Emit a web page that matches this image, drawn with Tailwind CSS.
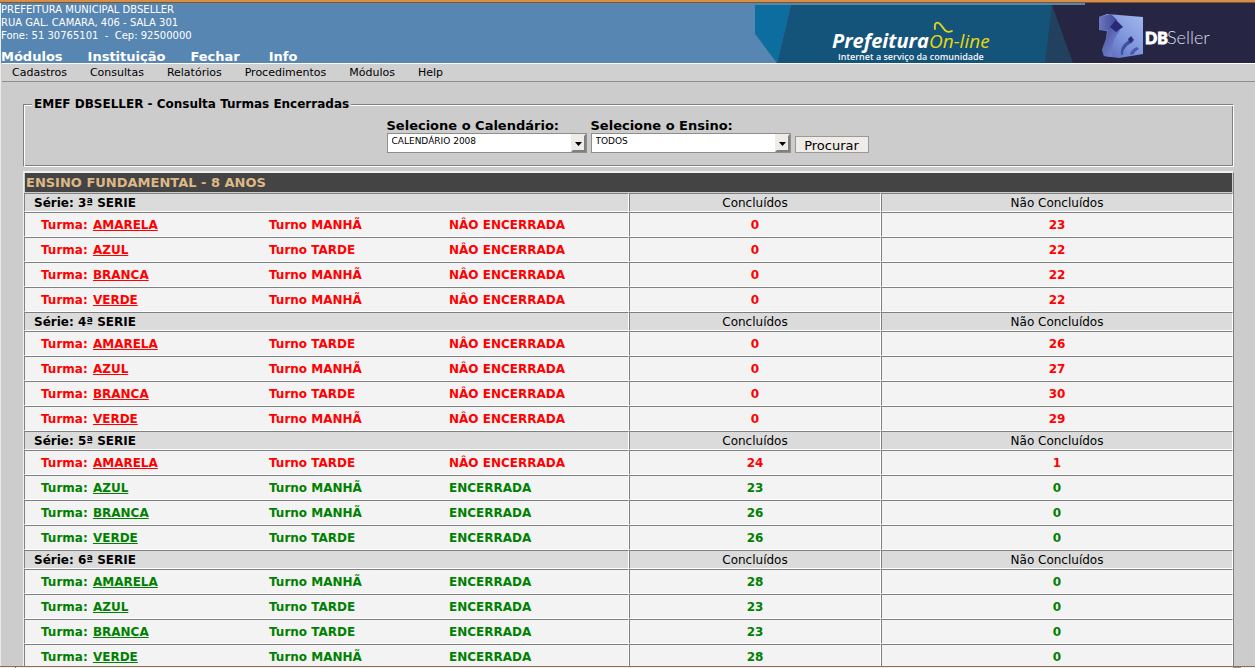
<!DOCTYPE html>
<html lang="pt-BR">
<head>
<meta charset="utf-8">
<title>Consulta Turmas Encerradas</title>
<script src="https://cdn.jsdelivr.net/npm/@tailwindcss/browser@4"></script>
</head>
<body class="flex h-screen flex-col overflow-hidden bg-[#cccccc] font-['DejaVu_Sans',sans-serif] text-[13px] leading-4 text-black">
<div class="h-[3px] shrink-0 border-b border-[#7d5630] bg-[#d78f47]"></div>
<div class="flex min-h-0 flex-1 flex-col overflow-hidden border-l border-[#efebe7]">
  <header class="flex h-[60px] shrink-0 justify-between bg-[#5786b2] text-white">
    <div class="flex flex-col justify-between">
      <address class="text-[10px] leading-[13px] whitespace-pre not-italic">PREFEITURA MUNICIPAL DBSELLER
RUA GAL. CAMARA, 406 - SALA 301
Fone: 51 30765101  -  Cep: 92500000</address>
      <nav class="flex gap-[25px] leading-3 font-bold">
        <a href="#">Módulos</a><a href="#">Instituição</a><a href="#">Fechar</a><a href="#" class="ml-1">Info</a>
      </nav>
    </div>
    <svg class="h-[60px] w-[500px] shrink-0" viewBox="0 0 500 60" role="img" aria-label="Prefeitura On-line - DBSeller">
      <defs>
        <linearGradient id="cube" x1="0" y1="1" x2="1" y2="0"><stop offset="0" stop-color="#5363b8"/><stop offset=".5" stop-color="#7f95dc"/><stop offset="1" stop-color="#a3b9ee"/></linearGradient>
        <linearGradient id="side" x1="0" y1="0" x2="1" y2="1"><stop offset="0" stop-color="#46509f"/><stop offset="1" stop-color="#7f8fd6"/></linearGradient>
        <linearGradient id="face" x1="0" y1="0" x2="1" y2="0"><stop offset="0" stop-color="#6b78bd"/><stop offset="1" stop-color="#3d459c"/></linearGradient>
      </defs>
      <path d="M0 2H36L22 60L0 31Z" fill="#0c6d9f"/>
      <path d="M36 2H330V60H22Z" fill="#14537a"/>
      <path d="M297 2H308L330 60H290Z" fill="#22415f"/>
      <path d="M297 2H330V0H500V60H318Z" fill="#262644"/>
      <text x="77" y="45" fill="#fff" font-family="Open Sans, sans-serif" font-size="20" font-weight="700" font-style="italic">Prefeitura</text>
      <text x="174" y="45" fill="#e8d80c" font-family="Open Sans, sans-serif" font-size="19" font-style="italic">On-line</text>
      <path d="M180 26C179 20 182 18 185 21C189 25 190 31 197 28" fill="none" stroke="#e2d616" stroke-width="1.8" stroke-linecap="round"/>
      <text x="83" y="57" fill="#f4f8fb" font-family="Open Sans, sans-serif" font-size="9" font-weight="600">Internet a serviço da comunidade</text>
      <path d="M344 14L352 11L388 14V51L364 55L349 53L347 47L351 36L352 28L344 27Z" fill="url(#cube)"/>
      <path d="M344 14L356 11L362 17L357 27L344 27Z" fill="url(#face)"/>
      <path d="M353 26L359 24L365 28C359 34 356 44 357 54L349 53L347 47L351 36Z" fill="url(#side)"/>
      <path d="M355 24L361 17L368 24L361 29Z" fill="#2a2879"/>
      <path d="M366 52C365 45 368 40 376 36L378 39C372 42 368 46 368 52Z" fill="#4250a2"/>
      <path d="M373 36L376 33L379 37L375 40Z" fill="#2a2f76"/>
      <path d="M375 52C375 48 379 45 382 44L384 46C381 48 379 49 379 51Z" fill="#4959b0"/>
      <text x="390" y="41" fill="#fff" stroke="#fff" stroke-width=".9" font-family="Lato, sans-serif" font-size="16" font-weight="900">DB</text>
      <text x="412" y="41" fill="#dcdeea" font-family="Lato, sans-serif" font-size="18" font-weight="300">Seller</text>
    </svg>
  </header>
  <nav class="ml-px flex h-[19px] shrink-0 gap-[23px] border-t border-b border-t-white border-b-[#8e8e8e] bg-[#d0d0d0] pl-[10px] text-[11px] leading-[17px]">
    <a href="#">Cadastros</a><a href="#">Consultas</a><a href="#">Relatórios</a><a href="#">Procedimentos</a><a href="#">Módulos</a><a href="#">Help</a>
  </nav>
  <main class="mr-[21px] ml-[22px] pt-[14px]">
    <form>
      <fieldset class="h-[71px] border border-t-[#808080] border-r-white border-b-white border-l-[#808080] pr-[10px] pl-2 shadow-[inset_1px_1px_0_#ffffff,inset_-1px_-1px_0_#808080]">
        <legend class="bg-[#cccccc] px-[2px] text-[12px] font-bold">EMEF DBSELLER - Consulta Turmas Encerradas</legend>
        <div class="flex items-end justify-center gap-1 pt-[6px]">
          <div class="flex w-50 flex-col">
            <label for="cal" class="leading-[15px] font-bold">Selecione o Calendário:</label>
            <div class="relative">
              <select id="cal" class="block h-5 w-full appearance-none border border-[#8e8e8e] bg-white pb-1 pl-1 text-[9px] leading-[14px]"><option>CALENDÁRIO 2008</option></select>
              <svg class="pointer-events-none absolute top-px right-px h-[18px] w-[15px]" viewBox="0 0 15 18" aria-hidden="true"><path d="M0 0H15V18H0Z" fill="#efebe7"/><path d="M15 0V18H0L2 16H13V2Z" fill="#808080"/><path d="M4 8H11L7.500 12Z"/></svg>
            </div>
          </div>
          <div class="flex w-50 flex-col">
            <label for="ens" class="leading-[15px] font-bold">Selecione o Ensino:</label>
            <div class="relative">
              <select id="ens" class="block h-5 w-full appearance-none border border-[#8e8e8e] bg-white pb-1 pl-1 text-[9px] leading-[14px]"><option>TODOS</option></select>
              <svg class="pointer-events-none absolute top-px right-px h-[18px] w-[15px]" viewBox="0 0 15 18" aria-hidden="true"><path d="M0 0H15V18H0Z" fill="#efebe7"/><path d="M15 0V18H0L2 16H13V2Z" fill="#808080"/><path d="M4 8H11L7.500 12Z"/></svg>
            </div>
          </div>
          <button type="button" class="h-[17px] w-[74px] border border-[#999999] bg-[#efebe7] leading-[17px]">Procurar</button>
        </div>
      </fieldset>
    </form>
    <table class="mt-1 w-full table-fixed border-separate border-spacing-0 border border-t-2 border-[#f0f0f0] border-r-[#808080] text-[12px]">
      <colgroup><col><col class="w-[252px]"><col class="w-[352px]"></colgroup>
      <thead><tr><th colspan="3" class="h-5 border-r border-b border-l border-[#cccccc] bg-[#444444] p-0 pl-px text-left text-[13px] font-bold text-[#deb887]">ENSINO FUNDAMENTAL - 8 ANOS</th></tr></thead>
      <tbody id="rows"></tbody>
    </table>
  </main>
</div>
<div class="flex h-[2px] shrink-0 border-t border-[#84705f] bg-[#f8ece4]"><span class="ml-[15px] w-px bg-[#84705f]"></span><span class="mr-[14px] ml-auto w-2 bg-[#a09488]"></span></div>
<script>
const series = [
  ["3ª SERIE", [["AMARELA","MANHÃ",0,0,23],["AZUL","TARDE",0,0,22],["BRANCA","MANHÃ",0,0,22],["VERDE","MANHÃ",0,0,22]]],
  ["4ª SERIE", [["AMARELA","TARDE",0,0,26],["AZUL","MANHÃ",0,0,27],["BRANCA","TARDE",0,0,30],["VERDE","MANHÃ",0,0,29]]],
  ["5ª SERIE", [["AMARELA","TARDE",0,24,1],["AZUL","MANHÃ",1,23,0],["BRANCA","MANHÃ",1,26,0],["VERDE","TARDE",1,26,0]]],
  ["6ª SERIE", [["AMARELA","MANHÃ",1,28,0],["AZUL","TARDE",1,23,0],["BRANCA","TARDE",1,23,0],["VERDE","MANHÃ",1,28,0]]]
];
const head = "h-[19px] border border-t-[#808080] border-l-[#808080] border-r-white border-b-white bg-[#dbdbdb] p-0";
const cell = "h-[25px] border border-t-[#808080] border-l-[#808080] border-r-white border-b-white bg-[#f3f3f3] p-0";
document.getElementById("rows").innerHTML = series.map(([name, classes]) =>
  `<tr><th class="${head} text-left font-bold"><span class="pl-[9px]">Série: ${name}</span></th><th class="${head} font-normal">Concluídos</th><th class="${head} font-normal">Não Concluídos</th></tr>` +
  classes.map(([t, turn, done, a, b]) =>
    `<tr class="font-bold ${done ? "text-[#008000]" : "text-[#ff0000]"}"><td class="${cell}"><div class="flex pl-4"><span class="w-[228px]">Turma: <a href="#" class="ml-px underline">${t}</a></span><span class="w-[180px]">Turno ${turn}</span><span>${done ? "ENCERRADA" : "NÂO ENCERRADA"}</span></div></td><td class="${cell} text-center">${a}</td><td class="${cell} text-center">${b}</td></tr>`).join("")
).join("");
</script>
</body>
</html>
